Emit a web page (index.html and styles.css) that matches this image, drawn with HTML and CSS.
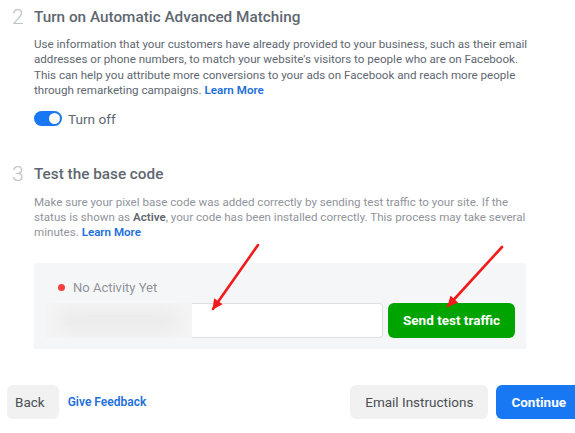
FILE: index.html
```html
<!DOCTYPE html>
<html lang="en">
  <head>
    <meta charset="UTF-8" />
    <meta name="viewport" content="width=device-width, initial-scale=1.0" />
    <title>Pixel Setup</title>
    <link rel="stylesheet" href="styles.css">
  </head>

  <body>
    <div class="page">
      <section class="step">
        <div class="step-num">2</div>
        <div class="step-body">
          <h2 class="step-title">Turn on Automatic Advanced Matching</h2>
          <p class="step-text">
            Use information that your customers have already provided to your business, such as their email<br>
            addresses or phone numbers, to match your website's visitors to people who are on Facebook.<br>
            This can help you attribute more conversions to your ads on Facebook and reach more people<br>
            through remarketing campaigns. <a class="link" href="#">Learn More</a>
          </p>
          <div class="toggle-row">
            <span class="toggle"><span class="knob"></span></span>
            <span class="toggle-label">Turn off</span>
          </div>
        </div>
      </section>

      <section class="step step-3">
        <div class="step-num">3</div>
        <div class="step-body">
          <h2 class="step-title">Test the base code</h2>
          <p class="step-text muted">
            Make sure your pixel base code was added correctly by sending test traffic to your site. If the<br>
            status is shown as <b>Active</b>, your code has been installed correctly. This process may take several<br>
            minutes. <a class="link" href="#">Learn More</a>
          </p>
          <div class="test-box">
            <div class="status"><span class="dot"></span>No Activity Yet</div>
            <div class="test-row">
              <div class="url-field">
                <span class="redacted"><span class="smudge"></span></span>
              </div>
              <button class="btn btn-green">Send test traffic</button>
            </div>
          </div>
        </div>
      </section>

      <footer class="footer">
        <button class="btn btn-gray btn-back">Back</button>
        <a class="link feedback" href="#">Give Feedback</a>
        <div class="footer-right">
          <button class="btn btn-gray">Email Instructions</button>
          <button class="btn btn-blue">Continue</button>
        </div>
      </footer>

      <!-- pointer arrows drawn over the test box -->
      <svg class="arrows" width="575" height="433" viewBox="0 0 575 433">
        <defs>
          <marker id="head" viewBox="0 0 10 10" refX="9" refY="5" markerWidth="4.5" markerHeight="4" orient="auto">
            <path d="M0 0 L10 5 L0 10 Z" fill="#f21b1b" />
          </marker>
        </defs>
        <line x1="258" y1="245" x2="213" y2="309" stroke="#f21b1b" stroke-width="2.6" stroke-linecap="round" marker-end="url(#head)" />
        <line x1="502" y1="247" x2="448" y2="306" stroke="#f21b1b" stroke-width="2.6" stroke-linecap="round" marker-end="url(#head)" />
      </svg>
    </div>
  </body>
</html>
```

FILE: styles.css
```css
body {
  margin: 0;
  background-color: #fff;
  font-family: Roboto, "Liberation Sans", Arial, sans-serif;
  color: #606770;
  overflow: hidden;
}

.page {
  position: relative;
  width: 575px;
  height: 433px;
  padding-top: 6px;
  box-sizing: border-box;
}

.step {
  display: flex;
}

.step-3 {
  margin-top: 36px;
}

.step-num {
  width: 22px;
  padding-left: 12px;
  font-size: 21px;
  font-weight: 300;
  line-height: 22px;
  color: #bec3c9;
}

.step-body {
  width: 530px;
}

.step-title {
  margin: 0;
  font-size: 15.3px;
  font-weight: 500;
  line-height: 22px;
  color: #606770;
}

.step-text {
  margin: 9px 0 0;
  font-size: 11.6px;
  line-height: 15.4px;
  color: #606770;
  white-space: nowrap;
}

.step-3 .step-text {
  margin-top: 10px;
}

.step-text.muted {
  color: #90949c;
}

.step-text b {
  color: #606770;
  font-weight: 600;
}

.link {
  color: #216fdb;
  font-weight: 600;
  text-decoration: none;
}

.toggle-row {
  display: flex;
  align-items: center;
  gap: 6px;
  margin-top: 12px;
}

.toggle {
  display: flex;
  justify-content: flex-end;
  align-items: center;
  width: 28px;
  height: 15px;
  padding: 0 2px;
  box-sizing: border-box;
  border-radius: 8px;
  background-color: #1877f2;
}

.knob {
  width: 11px;
  height: 11px;
  border-radius: 50%;
  background-color: #fff;
}

.toggle-label {
  font-size: 13.6px;
  line-height: 16px;
  color: #606770;
}

.test-box {
  margin-top: 22px;
  width: 492px;
  padding: 16px 11px 11px;
  box-sizing: border-box;
  background-color: #f5f6f7;
}

.status {
  display: flex;
  align-items: center;
  gap: 8px;
  padding-left: 13px;
  font-size: 13px;
  line-height: 18px;
  color: #90949c;
}

.dot {
  width: 7px;
  height: 7px;
  border-radius: 50%;
  background-color: #fa3e3e;
}

.test-row {
  display: flex;
  gap: 5px;
  margin-top: 6px;
}

.url-field {
  flex: 1;
  height: 35px;
  display: flex;
  background-color: #fff;
  border: 1px solid #dddfe2;
  border-left: none;
  border-radius: 0 4px 4px 0;
  box-sizing: border-box;
}

/* hidden site address */
.redacted {
  width: 147px;
  height: 35px;
  margin-top: -1px;
  overflow: hidden;
  background-color: #f4f4f4;
}

.smudge {
  display: block;
  margin: 7px 14px;
  height: 22px;
  border-radius: 11px;
  background-color: #ebebeb;
  filter: blur(7px);
}

.btn {
  border: none;
  border-radius: 6px;
  font-family: Roboto, "Liberation Sans", Arial, sans-serif;
  font-size: 13.5px;
  height: 35px;
  padding: 0 15px;
  cursor: pointer;
}

.btn-green {
  width: 127px;
  padding: 0;
  background-color: #00a400;
  color: #fff;
  font-weight: 700;
}

.footer {
  display: flex;
  align-items: center;
  width: 581px;
  margin-top: 36px;
  padding-left: 7px;
  box-sizing: border-box;
}

.footer .btn {
  height: 34px;
}

.btn-gray {
  background-color: #f1f1f1;
  color: #4b4f56;
}

.btn-back {
  padding: 0 14px 0 8px;
}

.feedback {
  margin-left: 9px;
  font-size: 12px;
}

.footer-right {
  display: flex;
  gap: 8px;
  margin-left: auto;
}

.btn-blue {
  background-color: #1877f2;
  color: #fff;
  font-weight: 700;
}

.arrows {
  position: absolute;
  top: 0;
  left: 0;
  pointer-events: none;
}
```
